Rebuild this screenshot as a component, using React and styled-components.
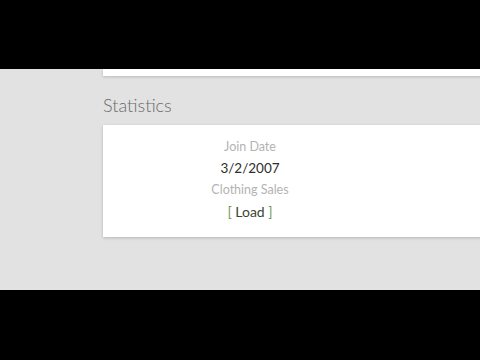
import React from "react";
import styled, { createGlobalStyle } from "styled-components";

const Global = createGlobalStyle`
  html, body { margin: 0; padding: 0; background: #000; }
  body { font-family: Lato, "Open Sans", sans-serif; }
`;

const Frame = styled.div`
  width: 480px;
  height: 360px;
  display: flex;
  flex-direction: column;
  background: #000;
  overflow: hidden;
`;

const Letterbox = styled.div`
  height: ${(p) => p.h}px;
  flex: none;
  background: #000;
`;

const Stage = styled.div`
  height: 221px;
  flex: none;
  background: #e2e2e2;
  padding-left: 103px;
  overflow: hidden;
  display: flex;
  flex-direction: column;
`;

const TopCard = styled.div`
  height: 7px;
  width: 400px;
  background: #fff;
  box-shadow: 0 1px 3px rgba(0, 0, 0, 0.18);
`;

const Heading = styled.h2`
  margin: 18px 0 0 0;
  font-size: 18px;
  line-height: 22px;
  font-weight: 300;
  color: #6a6a6a;
`;

const Card = styled.div`
  margin-top: 9px;
  width: 400px;
  height: 112px;
  box-sizing: border-box;
  background: #fff;
  box-shadow: 0 1px 3px rgba(0, 0, 0, 0.2);
  padding-top: 11px;
`;

const Column = styled.div`
  width: 294px;
  display: flex;
  flex-direction: column;
  align-items: center;
`;

const Label = styled.div`
  font-size: 12.5px;
  line-height: 21px;
  color: #b3b3b3;
`;

const Value = styled.div`
  font-size: 13.5px;
  line-height: 22px;
  color: #2e2e2e;
`;

const LoadLink = styled.div`
  font-size: 14px;
  line-height: 24px;
  color: #3a4632;
`;

const Bracket = styled.span`
  color: #73995a;
`;

export default function App() {
  return (
    <Frame>
      <Global />
      <Letterbox h={69} />
      <Stage>
        <TopCard />
        <Heading>Statistics</Heading>
        <Card>
          <Column>
            <Label>Join Date</Label>
            <Value>3/2/2007</Value>
            <Label>Clothing Sales</Label>
            <LoadLink>
              <Bracket>[</Bracket> Load <Bracket>]</Bracket>
            </LoadLink>
          </Column>
        </Card>
      </Stage>
      <Letterbox h={70} />
    </Frame>
  );
}
